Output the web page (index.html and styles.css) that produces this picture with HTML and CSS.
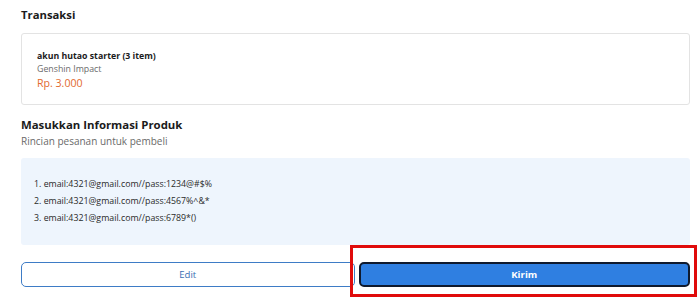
FILE: index.html
```html
<!DOCTYPE html>
<html lang="id">
<head>
<meta charset="utf-8">
<title>Transaksi</title>
<link rel="stylesheet" href="styles.css">
</head>
<body>
<main class="page">
  <h2 class="section-title">Transaksi</h2>
  <div class="card">
    <div class="item-name">akun hutao starter (3 item)</div>
    <div class="item-game">Genshin Impact</div>
    <div class="item-price">Rp. 3.000</div>
  </div>
  <h2 class="info-title">Masukkan Informasi Produk</h2>
  <p class="info-sub">Rincian pesanan untuk pembeli</p>
  <div class="info-box">
    <div class="info-row">1. email:4321@gmail.com//pass:1234@#$%</div>
    <div class="info-row">2. email:4321@gmail.com//pass:4567%^&amp;*</div>
    <div class="info-row">3. email:4321@gmail.com//pass:6789*()</div>
  </div>
  <div class="actions">
    <button class="btn btn-edit">Edit</button>
    <div class="highlight-wrap">
      <button class="btn btn-send">Kirim</button>
      <span class="highlight"></span>
    </div>
  </div>
</main>
</body>
</html>
```

FILE: styles.css
```css
* { box-sizing: border-box; }
html, body { margin: 0; padding: 0; background: #ffffff; }
body {
  font-family: "Open Sans", "Noto Sans", "Liberation Sans", sans-serif;
  color: #1b1b1b;
}
.page {
  width: 669px;
  margin-left: 21px;
  padding-top: 6px;
  padding-bottom: 15px;
}
.section-title {
  margin: 0;
  font-size: 11.3px;
  line-height: 18px;
  font-weight: 700;
}
.card {
  margin-top: 9px;
  height: 72px;
  border: 1px solid #e3e3e3;
  border-radius: 3px;
  padding: 16px 15px 0;
}
.item-name {
  font-size: 8.75px;
  font-weight: 700;
  line-height: 13px;
  color: #1b1b1b;
}
.item-game {
  font-size: 8.8px;
  line-height: 13px;
  color: #6b6b6b;
}
.item-price {
  font-size: 10.6px;
  line-height: 14px;
  color: #e2692e;
}
.info-title {
  margin: 11px 0 0;
  font-size: 11.4px;
  line-height: 18px;
  font-weight: 700;
}
.info-sub {
  margin: 0;
  font-size: 10px;
  line-height: 15px;
  color: #6a6a6a;
}
.info-box {
  margin-top: 9px;
  height: 87px;
  background: #eef5fd;
  border-radius: 3px;
  padding: 18px 13px 0;
}
.info-row {
  font-size: 8.8px;
  line-height: 17px;
  color: #2a2a2a;
}
.actions {
  margin-top: 17px;
  display: flex;
  gap: 4px;
}
.btn {
  flex: 1;
  height: 25px;
  border-radius: 5px;
  font-family: inherit;
  font-size: 9.6px;
  padding: 0;
  cursor: pointer;
}
.btn-edit {
  background: #ffffff;
  border: 1px solid #3e7cc6;
  color: #3b6fb4;
}
.highlight-wrap {
  flex: 1;
  position: relative;
  display: flex;
}
.btn-send {
  background: #2f7fe1;
  border: 2px solid #0f1a2e;
  color: #ffffff;
  font-weight: 700;
}
.highlight {
  position: absolute;
  left: -9px;
  top: -17px;
  right: -7px;
  bottom: -10px;
  border: 3px solid #e00b0b;
  pointer-events: none;
}
```
